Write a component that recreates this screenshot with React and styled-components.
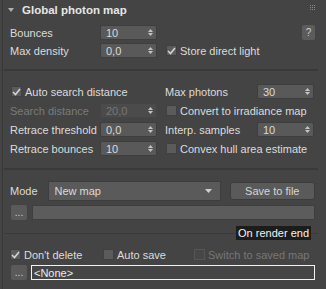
import styled, { createGlobalStyle } from "styled-components";

const Global = createGlobalStyle`
  html, body { margin: 0; padding: 0; background: #444444; }
  * { box-sizing: border-box; }
  body {
    font-family: "Liberation Sans", Arial, sans-serif;
    font-size: 11px;
    color: #dcdcdc;
  }
`;

const Panel = styled.div`
  width: 324px;
  height: 289px;
  margin-left: 2px;
  border-left: 1px solid #383838;
  background: #444444;
  padding: 0 11px 0 7px;
  display: flex;
  flex-direction: column;
  overflow: hidden;
`;

const Header = styled.div`
  height: 20px;
  display: flex;
  align-items: center;
  margin-left: -2px;
`;

const Title = styled.div`
  margin-left: 8px;
  font-weight: bold;
  font-size: 11.5px;
  color: #e6e6e6;
  flex: 1;
`;

const Columns = styled.div`
  display: grid;
  grid-template-columns: 147px 1fr;
  grid-auto-rows: 15px;
  column-gap: 8px;
  row-gap: ${(p) => p.$gap}px;
  margin-top: ${(p) => p.$top}px;
`;

const Field = styled.div`
  display: flex;
  align-items: center;
  height: 15px;
`;

const Label = styled.span`
  width: ${(p) => p.$w || 90}px;
  white-space: nowrap;
  color: ${(p) => (p.$disabled ? "#7a7a7a" : "#dcdcdc")};
`;

const SpinBox = styled.div`
  width: 57px;
  height: 15px;
  display: flex;
  align-items: center;
  padding: 0 3px 0 5px;
  background: ${(p) => (p.$disabled ? "#4b4b4b" : "#595959")};
  border: 1px solid ${(p) => (p.$disabled ? "#454545" : "#3e3e3e")};
  border-radius: 2px;
  color: ${(p) => (p.$disabled ? "#777777" : "#dadada")};
  svg { margin-left: auto; }
`;

const CheckRow = styled.label`
  display: flex;
  align-items: center;
  height: 15px;
  margin-left: 1px;
  white-space: nowrap;
  color: ${(p) => (p.$disabled ? "#777777" : "#dcdcdc")};
`;

const Box = styled.span`
  width: 11px;
  height: 11px;
  margin-right: 3px;
  display: flex;
  align-items: center;
  justify-content: center;
  background: ${(p) => (p.$disabled ? "#474747" : "#5b5b5b")};
  border: 1px solid ${(p) => (p.$disabled ? "#555555" : "#404040")};
`;

const HelpBtn = styled.div`
  margin-left: auto;
  width: 13px;
  height: 15px;
  border-radius: 2px;
  background: #5c5c5c;
  color: #cfcfcf;
  font-size: 10px;
  display: flex;
  align-items: center;
  justify-content: center;
`;

const Separator = styled.div`
  height: 2px;
  background: #393939;
  margin: ${(p) => p.$top}px -3px ${(p) => p.$bottom}px -6px;
`;

const Row = styled.div`
  display: flex;
  align-items: center;
  height: ${(p) => p.$h}px;
  margin-top: ${(p) => p.$top}px;
`;

const Dropdown = styled.div`
  width: 173px;
  height: 20px;
  margin-left: 10px;
  background: #5a5a5a;
  border: 1px solid #3d3d3d;
  display: flex;
  align-items: center;
  padding: 0 8px 0 6px;
  color: #dadada;
  svg { margin-left: auto; }
`;

const Button = styled.div`
  flex: 1;
  height: 18px;
  margin-left: 9px;
  background: #5a5a5a;
  border: 1px solid #3c3c3c;
  border-radius: 3px;
  display: flex;
  align-items: center;
  justify-content: center;
  color: #d6d6d6;
`;

const DotsBtn = styled.div`
  width: 16px;
  height: 15px;
  margin-left: 1px;
  border-radius: 2px;
  background: #5a5a5a;
  color: #cfcfcf;
  display: flex;
  align-items: flex-end;
  justify-content: center;
  padding-bottom: 2px;
  font-size: 10px;
  line-height: 10px;
`;

const PathField = styled.div`
  flex: 1;
  height: 15px;
  margin-left: ${(p) => (p.$outlined ? 4 : 5)}px;
  background: ${(p) => (p.$outlined ? "#454545" : "#5c5c5c")};
  border: 1px solid ${(p) => (p.$outlined ? "#f2f2f2" : "#3e3e3e")};
  display: flex;
  align-items: center;
  padding-left: 2px;
  color: #ececec;
`;

const GroupHead = styled.div`
  display: flex;
  align-items: center;
  height: 14px;
  margin: 6px -3px 0 -6px;
`;

const GroupLine = styled.div`
  height: 1px;
  background: #3a3a3a;
  flex: ${(p) => (p.$fixed ? "0 0 7px" : 1)};
`;

const GroupTitle = styled.span`
  background: #1c1c1c;
  color: #f4f4f4;
  padding: 0 2px;
  height: 14px;
  line-height: 14px;
`;

const CheckGrid = styled.div`
  display: grid;
  grid-template-columns: 93px 91px 1fr;
  height: 11px;
  align-items: center;
  margin-top: 7px;
  label { margin-left: 0; }
`;

const Arrows = () => (
  <svg width="5" height="7" viewBox="0 0 5 7">
    <polygon points="2.5,0 5,3 0,3" fill="#c4c4c4" />
    <polygon points="0,4 5,4 2.5,7" fill="#c4c4c4" />
  </svg>
);

const Spinner = ({ value, disabled }) => (
  <SpinBox $disabled={disabled}>
    {value}
    <Arrows />
  </SpinBox>
);

const Check = ({ checked, disabled, children }) => (
  <CheckRow $disabled={disabled}>
    <Box $disabled={disabled}>
      {checked && (
        <svg width="9" height="8" viewBox="0 0 9 8">
          <polyline points="1,4 3.5,6.5 8,1" fill="none" stroke="#d4d4d4" strokeWidth="1.6" />
        </svg>
      )}
    </Box>
    {children}
  </CheckRow>
);

const Grip = () => (
  <svg width="5" height="5" viewBox="0 0 5 5" shapeRendering="crispEdges" style={{ marginTop: -5 }}>
    {[0, 2, 4].map((y) =>
      [0, 2, 4].map((x) => <rect key={`${x}-${y}`} x={x} y={y} width="1" height="1" fill="#8a8a8a" />)
    )}
  </svg>
);

export default function App() {
  return (
    <>
      <Global />
      <Panel>
        <Header>
          <svg width="6" height="4" viewBox="0 0 6 4">
            <polygon points="0,0 6,0 3,4" fill="#b0b0b0" />
          </svg>
          <Title>Global photon map</Title>
          <Grip />
        </Header>

        <Columns $gap={3} $top={5}>
          <Field>
            <Label>Bounces</Label>
            <Spinner value="10" />
          </Field>
          <Field>
            <HelpBtn>?</HelpBtn>
          </Field>
          <Field>
            <Label>Max density</Label>
            <Spinner value="0,0" />
          </Field>
          <Check checked>Store direct light</Check>
        </Columns>

        <Separator $top={11} $bottom={13} />

        <Columns $gap={4} $top={0}>
          <Check checked>Auto search distance</Check>
          <Field>
            <Label $w={92}>Max photons</Label>
            <Spinner value="30" />
          </Field>
          <Field>
            <Label $disabled>Search distance</Label>
            <Spinner value="20,0" disabled />
          </Field>
          <Check>Convert to irradiance map</Check>
          <Field>
            <Label>Retrace threshold</Label>
            <Spinner value="0,0" />
          </Field>
          <Field>
            <Label $w={92}>Interp. samples</Label>
            <Spinner value="10" />
          </Field>
          <Field>
            <Label>Retrace bounces</Label>
            <Spinner value="10" />
          </Field>
          <Check>Convex hull area estimate</Check>
        </Columns>

        <Separator $top={12} $bottom={0} />

        <Row $h={20} $top={11}>
          <span>Mode</span>
          <Dropdown>
            New map
            <svg width="7" height="4" viewBox="0 0 7 4">
              <polygon points="0,0 7,0 3.5,4" fill="#d0d0d0" />
            </svg>
          </Dropdown>
          <Button>Save to file</Button>
        </Row>

        <Row $h={15} $top={4}>
          <DotsBtn>...</DotsBtn>
          <PathField />
        </Row>

        <GroupHead>
          <GroupLine />
          <GroupTitle>On render end</GroupTitle>
          <GroupLine $fixed />
        </GroupHead>

        <CheckGrid>
          <Check checked>Don't delete</Check>
          <Check>Auto save</Check>
          <Check disabled>Switch to saved map</Check>
        </CheckGrid>

        <Row $h={15} $top={7}>
          <DotsBtn>...</DotsBtn>
          <PathField $outlined>&lt;None&gt;</PathField>
        </Row>
      </Panel>
    </>
  );
}
